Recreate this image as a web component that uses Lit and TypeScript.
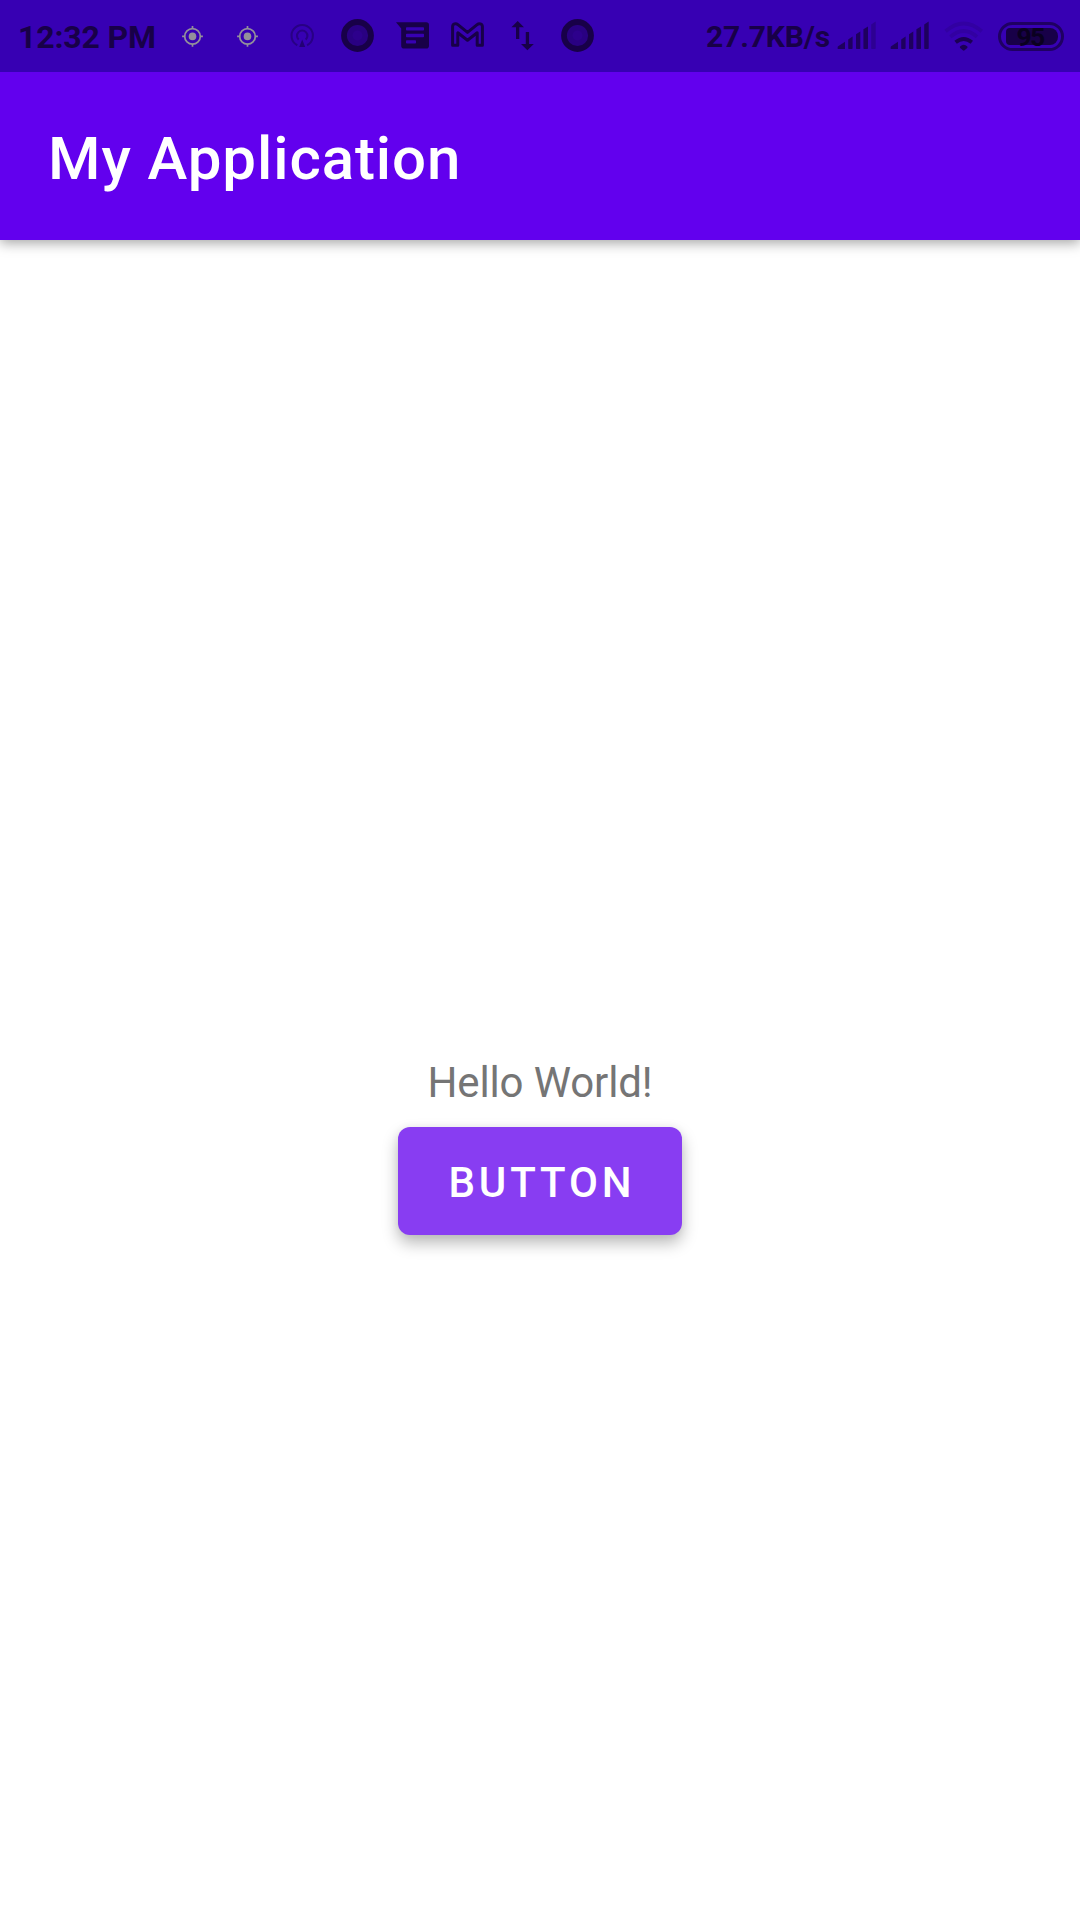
import { LitElement, html, css, svg } from "lit";
import { customElement, property } from "lit/decorators.js";

const INK = "#180048";

const location = svg`
  <g fill="none" stroke="#93909a" stroke-width="1.7">
    <circle cx="27.5" cy="36.4" r="7.8"/>
    <path d="M27.5 26v3M27.5 43.8v3M17.1 36.4h3M34.9 36.4h3"/>
  </g>
  <circle cx="27.5" cy="36.4" r="3.8" fill="#93909a"/>`;

const hotspot = svg`
  <g fill="none" stroke="#280084" stroke-width="2.1">
    <path d="M22.3 45.2A10.7 10.7 0 1 1 32.1 45.2"/>
    <path d="M23.7 39.6A5.2 5.2 0 1 1 30.7 39.6"/>
  </g>
  <path d="M27.2 39.4L30.2 47H24.2Z" fill="#220074"/>`;

const record = svg`
  <circle cx="27.5" cy="35.5" r="13.5" fill="#290082" stroke="${INK}" stroke-width="5.8"/>
  <circle cx="27.5" cy="35.5" r="5" fill="#2d008c"/>`;

const message = svg`
  <path fill="${INK}" fill-rule="evenodd" d="M11 22.3H41.2A2.8 2.8 0 0 1 44 25.1V45.8A2.8 2.8 0 0 1 41.2 48.6H19A2.8 2.8 0 0 1 16.2 45.8V28.5ZM21.8 27.2Q21 27.2 21 28V29.8Q21 30.6 21.8 30.6H38.2Q39 30.6 39 29.8V28Q39 27.2 38.2 27.2ZM21.8 33.8Q21 33.8 21 34.6V36.4Q21 37.2 21.8 37.2H38.2Q39 37.2 39 36.4V34.6Q39 33.8 38.2 33.8ZM21.8 40.2Q21 40.2 21 41V42.8Q21 43.6 21.8 43.6H30.2Q31 43.6 31 42.8V41Q31 40.2 30.2 40.2Z"/>`;

const mail = svg`
  <path fill="none" stroke="${INK}" stroke-width="3" stroke-linejoin="round"
    d="M12.6 45.3V26.6C12.6 23.6 15.9 23.1 17.9 24.7L27.5 32.4L37.1 24.7C39.1 23.1 42.4 23.6 42.4 26.6V45.3H37.2V32.8L27.5 40.3L17.8 32.8V45.3Z"/>`;

const transfer = svg`
  <path fill="${INK}" d="M22.7 21L29 27.3H24.3V39H21V27.3H16.4ZM32.4 50.2L26 43.9H30.8V32H34.1V43.9H38.8Z"/>`;

const signal = (last: string) => svg`
  <g fill="#1e005e">
    <path d="M1.2 49H8V41.8L.8 46.4Q0 49 1.2 49Z"/>
    <path d="M11.2 39.4L15.6 36.6V48.2Q15.6 49 14.8 49H12Q11.2 49 11.2 48.2Z"/>
    <path d="M19 34.2L23.3 31.5V48.2Q23.3 49 22.5 49H19.8Q19 49 19 48.2Z"/>
    <path d="M26.4 29.2L31 26.4V48.2Q31 49 30.2 49H27.2Q26.4 49 26.4 48.2Z"/>
  </g>
  <path fill="${last}" d="M34.2 24.6L38.7 21.6V48.2Q38.7 49 37.9 49H35Q34.2 49 34.2 48.2Z"/>`;

const wifi = svg`
  <g fill="none" stroke-width="3.8">
    <path stroke="#3200a2" d="M1.6 31.3Q19.7 15.6 37.8 31.3"/>
    <path stroke="#3200a2" d="M6.4 36.8Q19.7 25 33 36.8"/>
    <path stroke="#1b0054" d="M11.6 42.3Q19.7 35.6 27.8 42.3"/>
  </g>
  <path fill="#1b0054" d="M16 46.5Q19.7 42.8 23.4 46.5Q23.9 47.2 23.2 47.9L20.6 50.3Q19.7 51 18.8 50.3L16.2 47.9Q15.5 47.2 16 46.5Z"/>`;

@customElement("status-icon")
class StatusIcon extends LitElement {
  @property({ attribute: false }) shape: unknown;
  @property({ type: Number }) width = 55;

  static styles = css`
    :host { display: block; flex: none; height: 72px; }
    svg { display: block; }
  `;

  render() {
    return html`<svg width=${this.width} height="72" viewBox="0 0 ${this.width} 72">${this.shape}</svg>`;
  }
}

@customElement("app-root")
class AppRoot extends LitElement {
  static styles = css`
    :host {
      display: flex;
      flex-direction: column;
      width: 1080px;
      height: 1920px;
      overflow: hidden;
      background: #fff;
      font-family: Roboto, "Liberation Sans", sans-serif;
    }
    .status {
      position: relative;
      z-index: 1;
      flex: none;
      display: flex;
      align-items: center;
      height: 72px;
      background: #3700b3;
      color: #180048;
      font-weight: 700;
      white-space: nowrap;
    }
    .clock {
      box-sizing: border-box;
      width: 165px;
      padding: 2px 0 0 18px;
      font-size: 32px;
      line-height: 38px;
      letter-spacing: -0.15px;
    }
    .speed {
      box-sizing: border-box;
      width: 131px;
      margin-left: auto;
      padding-top: 2px;
      font-size: 30px;
      line-height: 36px;
      letter-spacing: -0.12px;
    }
    .second { margin-left: 13px; }
    .wifi { margin-left: 14px; }
    .battery {
      box-sizing: border-box;
      display: flex;
      width: 66px;
      height: 29px;
      margin: 1px 16px 0 14px;
      padding: 3px 3px 3px 5px;
      border: 3px solid #1f0062;
      border-radius: 15px;
    }
    .charge {
      flex: 1;
      display: flex;
      align-items: center;
      justify-content: center;
      height: 17px;
      padding-right: 4px;
      border-radius: 4px 8px 8px 4px;
      background: #180048;
      color: #0a0020;
      font-size: 26.5px;
      line-height: 17px;
      letter-spacing: -1.8px;
    }
    .bar {
      flex: none;
      display: flex;
      align-items: center;
      height: 168px;
      padding-left: 48px;
      background: #6200ee;
      box-shadow: 0 3px 12px rgba(0, 0, 0, 0.36);
      color: #fff;
    }
    .title {
      margin: 0;
      padding-top: 5px;
      font-size: 60px;
      font-weight: 500;
      line-height: 70px;
      letter-spacing: 0.92px;
    }
    .content {
      flex: 1;
      display: flex;
      flex-direction: column;
      align-items: center;
      padding-top: 818px;
    }
    .greeting {
      margin: 0 0 19px;
      color: #757575;
      font-size: 42px;
      line-height: 50px;
      letter-spacing: -0.12px;
    }
    .button {
      width: 284px;
      height: 108px;
      padding: 4px 0 0 4px;
      border: 0;
      border-radius: 12px;
      background: #883df2;
      box-shadow: 0 8px 16px rgba(0, 0, 0, 0.28), 0 0 8px rgba(0, 0, 0, 0.05);
      color: #fff;
      font: 500 42px/50px Roboto, "Liberation Sans", sans-serif;
      letter-spacing: 3.9px;
      text-transform: uppercase;
    }
  `;

  private notifications = [location, location, hotspot, record, message, mail, transfer, record];

  render() {
    return html`
      <div class="status">
        <span class="clock">12:32 PM</span>
        ${this.notifications.map((shape) => html`<status-icon .shape=${shape}></status-icon>`)}
        <span class="speed">27.7KB/s</span>
        <status-icon .shape=${signal("#2d0092")} .width=${40}></status-icon>
        <status-icon class="second" .shape=${signal("#1e005e")} .width=${40}></status-icon>
        <status-icon class="wifi" .shape=${wifi} .width=${40}></status-icon>
        <div class="battery"><span class="charge">95</span></div>
      </div>
      <header class="bar"><h1 class="title">My Application</h1></header>
      <main class="content">
        <p class="greeting">Hello World!</p>
        <button class="button">Button</button>
      </main>
    `;
  }
}
